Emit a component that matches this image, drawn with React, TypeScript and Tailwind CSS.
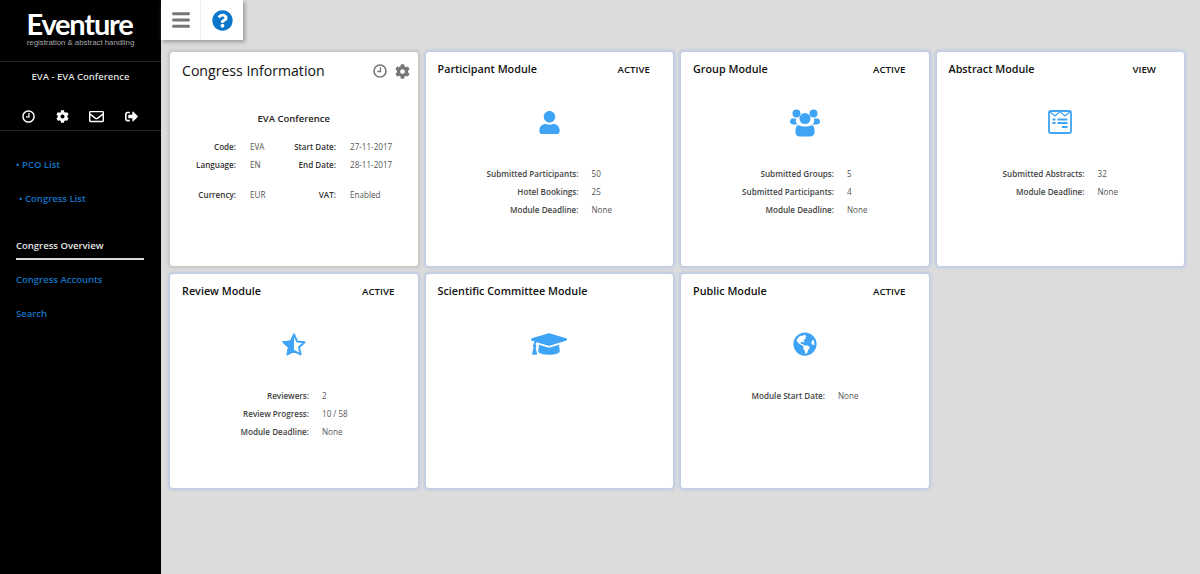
import { FaBars, FaCog, FaGlobeAmericas, FaGraduationCap, FaQuestionCircle, FaRegEnvelope, FaSignOutAlt, FaUser } from 'react-icons/fa';
import type { ReactNode } from 'react';

const ClockIcon = ({ className }: { className: string }) => (
  <svg viewBox="0 0 14 14" className={`fill-none stroke-current ${className}`}>
    <circle cx="7" cy="7" r="6" strokeWidth="1.600" />
    <path d="M7.500 3.200V7.500H4.300" strokeWidth="1.300" />
  </svg>
);

const UsersIcon = () => (
  <svg viewBox="0 0 30 28" className="h-[29px] w-[30px] fill-[#3fa4f5]">
    <circle cx="6.500" cy="5" r="4" />
    <circle cx="23.500" cy="5" r="4" />
    <path d="M2 10h4c-.6 2.200 0 4.500 1.600 6H3.500C1.500 16 0 14.800 0 13c0-1.300.7-2.500 2-3zM28 10h-4c.6 2.200 0 4.500-1.600 6h4.100c2 0 3.500-1.200 3.500-3 0-1.300-.7-2.500-2-3z" />
    <circle cx="15" cy="10" r="5.500" />
    <path d="M8.500 16.500c1.500 1 4 1.500 6.500 1.500s5-.5 6.500-1.500c2 .8 3 2.700 3 5.500v2c0 2.200-1.800 4-4 4h-11c-2.200 0-4-1.800-4-4v-2c0-2.800 1-4.700 3-5.500z" />
  </svg>
);

const AbstractIcon = () => (
  <svg viewBox="0 0 24 24" className="h-[24px] w-[24px] fill-none stroke-[#3fa4f5]">
    <rect x="1" y="1" width="22" height="22" rx="1.500" strokeWidth="1.800" />
    <path d="M1.500 1.500 7 6l5-4.500L17 6l5.500-4.500" strokeWidth="1.300" />
    <path d="M4.500 9.500h3M9.500 9.500h10M4.500 13h3M9.500 13h10M14 17h5.500" strokeWidth="1.800" />
  </svg>
);

const StarHalfIcon = () => (
  <svg viewBox="0 0 26 25" className="h-[25px] w-[26px]">
    <path
      d="M13 2.500l3.100 6.900 7.400.8-5.500 5 1.500 7.300-6.500-3.700-6.500 3.700 1.500-7.300-5.500-5 7.400-.8z"
      className="fill-none stroke-[#3fa4f5]"
      strokeWidth="2"
      strokeLinejoin="round"
    />
    <path d="M13 1v17.800l-7.500 4.300 1.700-8L1 9.400l8.200-.9z" className="fill-[#3fa4f5]" />
  </svg>
);

type Row = [string, string];

function ModuleCard({ title, status, statusClass, icon, rows, colsClass }: {
  title: string;
  status?: string;
  statusClass?: string;
  icon: ReactNode;
  rows: Row[];
  colsClass?: string;
}) {
  return (
    <div className="h-[214px] rounded-[3px] bg-white shadow-[0_0_3px_1.500px_#bccbe4]">
      <div className="flex h-[34px] items-center justify-between pl-3 pt-[1px]">
        <span className="text-[10.800px] font-semibold text-[#111]">{title}</span>
        {status && <span className={`mt-[1px] text-[9.700px] font-semibold text-[#111] ${statusClass}`}>{status}</span>}
      </div>
      <div className="mt-[21px] flex h-[30px] items-center justify-center">{icon}</div>
      <div className={`mt-[27.500px] grid gap-x-[13px] text-[8.100px] leading-[18.400px] ${colsClass}`}>
        {rows.map(([label, value]) => (
          <div key={label} className="contents">
            <span className="text-right font-semibold text-[#444]">{label}</span>
            <span className="text-[#555]">{value}</span>
          </div>
        ))}
      </div>
    </div>
  );
}

function InfoRow({ left, right, className }: { left: Row; right: Row; className?: string }) {
  return (
    <div className={`grid grid-cols-[66px_50px_50px_1fr] ${className ?? ''}`}>
      <span className="text-right font-semibold text-[#333]">{left[0]}</span>
      <span className="pl-[14px] text-[#555]">{left[1]}</span>
      <span className="whitespace-nowrap text-right font-semibold text-[#333]">{right[0]}</span>
      <span className="pl-[14px] text-[#555]">{right[1]}</span>
    </div>
  );
}

export default function App() {
  return (
    <div className="flex h-[574px] w-[1200px] overflow-hidden bg-[#dcdcdc] font-['Open_Sans',sans-serif]">
      <aside className="flex w-[161px] shrink-0 flex-col bg-black">
        <div className="flex h-[62px] flex-col items-center border-b border-[#262626] pt-[10px]">
          <span className="mr-[2px] font-['Lato',sans-serif] text-[29px] font-bold leading-[28px] tracking-[-1.200px] text-white">Eventure</span>
          <span className="mt-[0.500px] font-['Liberation_Sans',sans-serif] text-[7.800px] leading-[8px] text-[#aaa]">registration &amp; abstract handling</span>
        </div>
        <div className="mt-[8px] text-center text-[9.500px] font-semibold leading-[14px] text-[#ddd]">EVA - EVA Conference</div>
        <div className="flex h-[47px] items-end justify-between border-b border-[#262626] pb-[6px] pl-[22px] pr-[23px] text-white">
          <ClockIcon className="mb-[1px] h-[13px] w-[13px]" />
          <FaCog className="mb-[1px] text-[13px]" />
          <FaRegEnvelope className="text-[15px]" />
          <FaSignOutAlt className="mb-[1px] text-[13px]" />
        </div>
        <nav className="flex flex-col pt-[26px] text-[9.500px] font-semibold leading-[16px] text-[#1273c4]">
          <a className="ml-4">• PCO List</a>
          <a className="ml-[19px] mt-[18px]">• Congress List</a>
          <a className="ml-4 mt-[31px] text-[#e6e6e6]">Congress Overview</a>
          <div className="ml-4 mt-[4px] h-[2px] w-[128px] bg-[#d8d8d8]" />
          <a className="ml-4 mt-[12px]">Congress Accounts</a>
          <a className="ml-4 mt-[18px]">Search</a>
        </nav>
      </aside>

      <main className="flex-1">
        <div className="flex h-[40px] w-[82px] bg-white shadow-[2px_2px_4px_#999]">
          <div className="flex w-[40px] items-center justify-center border-r border-[#eee]">
            <FaBars className="text-[20px] text-[#777]" />
          </div>
          <div className="flex flex-1 items-center justify-center">
            <FaQuestionCircle className="text-[21px] text-[#0b75c9]" />
          </div>
        </div>

        <div className="ml-[9px] mt-[12px] grid w-[1014px] grid-cols-4 gap-x-[8px] gap-y-[8px]">
          <div className="h-[214px] rounded-[3px] bg-white shadow-[0_0_3px_1.500px_#c4c4c4]">
            <div className="flex items-center justify-between pl-3 pr-2 pt-[9px]">
              <span className="text-[14.100px] font-medium leading-[20px] text-[#111]">Congress Information</span>
              <span className="flex items-center gap-[8px] text-[#777]">
                <ClockIcon className="h-[14px] w-[14px]" />
                <FaCog className="text-[15px]" />
              </span>
            </div>
            <div className="mt-[31px] text-center text-[9.500px] font-semibold leading-[14px] text-[#222]">EVA Conference</div>
            <div className="mt-[14px] flex flex-col text-[8.100px] leading-[14px]">
              <InfoRow left={['Code:', 'EVA']} right={['Start Date:', '27-11-2017']} />
              <InfoRow className="mt-[4px]" left={['Language:', 'EN']} right={['End Date:', '28-11-2017']} />
              <InfoRow className="mt-[16px]" left={['Currency:', 'EUR']} right={['VAT:', 'Enabled']} />
            </div>
          </div>

          <ModuleCard
            title="Participant Module"
            status="ACTIVE"
            statusClass="mr-[23px]"
            icon={<FaUser className="text-[23px] text-[#3fa4f5]" />}
            colsClass="grid-cols-[153px_1fr]"
            rows={[['Submitted Participants:', '50'], ['Hotel Bookings:', '25'], ['Module Deadline:', 'None']]}
          />
          <ModuleCard
            title="Group Module"
            status="ACTIVE"
            statusClass="mr-[23px]"
            icon={<UsersIcon />}
            colsClass="grid-cols-[153px_1fr]"
            rows={[['Submitted Groups:', '5'], ['Submitted Participants:', '4'], ['Module Deadline:', 'None']]}
          />
          <ModuleCard
            title="Abstract Module"
            status="VIEW"
            statusClass="mr-[28px]"
            icon={<AbstractIcon />}
            colsClass="grid-cols-[148px_1fr]"
            rows={[['Submitted Abstracts:', '32'], ['Module Deadline:', 'None']]}
          />
          <ModuleCard
            title="Review Module"
            status="ACTIVE"
            statusClass="mr-[23px]"
            icon={<StarHalfIcon />}
            colsClass="grid-cols-[139px_1fr]"
            rows={[['Reviewers:', '2'], ['Review Progress:', '10 / 58'], ['Module Deadline:', 'None']]}
          />
          <ModuleCard
            title="Scientific Committee Module"
            icon={<FaGraduationCap className="text-[36px] text-[#3fa4f5]" />}
            rows={[]}
          />
          <ModuleCard
            title="Public Module"
            status="ACTIVE"
            statusClass="mr-[23px]"
            icon={<FaGlobeAmericas className="text-[24px] text-[#3fa4f5]" />}
            colsClass="grid-cols-[144px_1fr]"
            rows={[['Module Start Date:', 'None']]}
          />
        </div>
      </main>
    </div>
  );
}
